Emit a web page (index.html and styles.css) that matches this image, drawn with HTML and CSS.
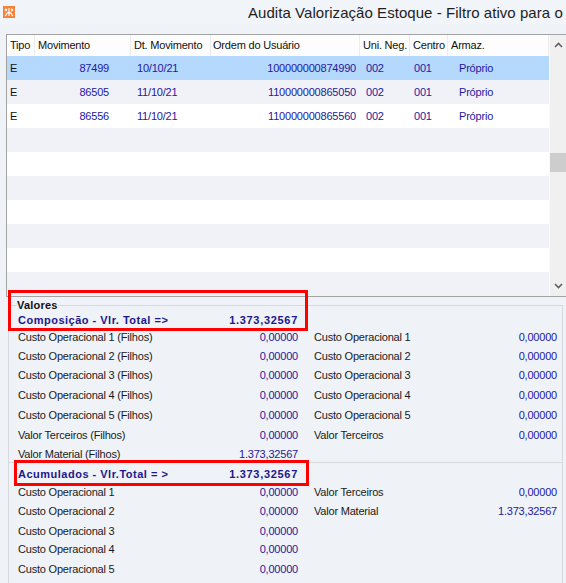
FILE: index.html
```html
<!DOCTYPE html>
<html lang="pt-BR">
<head>
    <meta charset="UTF-8">
    <title>Audita Valorização Estoque</title>
    <link rel="stylesheet" href="styles.css">
</head>
<body>
    <div class="window">
        <div class="title-bar">
            <span class="app-icon">
                <svg viewBox="0 0 12 12"><rect width="12" height="12" fill="#f5813a"/><path d="M2 3l2 2M4 3L2 5M8 3l2 2M10 3L8 5M6 2v8M3 8l3-2 3 2M2 10l2-2M10 10L8 8" stroke="#fff" stroke-width="1.1" fill="none"/></svg>
            </span>
            <span class="title">Audita Valorização Estoque - Filtro ativo para o</span>
        </div>

        <div class="grid">
            <div class="grid-body">
                <div class="grid-row grid-head">
                    <span>Tipo</span>
                    <span>Movimento</span>
                    <span>Dt. Movimento</span>
                    <span>Ordem do Usuário</span>
                    <span>Uni. Neg.</span>
                    <span>Centro</span>
                    <span>Armaz.</span>
                </div>
                <div class="grid-row selected">
                    <span class="tipo">E</span>
                    <span class="num">87499</span>
                    <span class="dt">10/10/21</span>
                    <span class="ordem">100000000874990</span>
                    <span class="uni">002</span>
                    <span class="centro">001</span>
                    <span class="armaz">Próprio</span>
                </div>
                <div class="grid-row">
                    <span class="tipo">E</span>
                    <span class="num">86505</span>
                    <span class="dt">11/10/21</span>
                    <span class="ordem">110000000865050</span>
                    <span class="uni">002</span>
                    <span class="centro">001</span>
                    <span class="armaz">Próprio</span>
                </div>
                <div class="grid-row">
                    <span class="tipo">E</span>
                    <span class="num">86556</span>
                    <span class="dt">11/10/21</span>
                    <span class="ordem">110000000865560</span>
                    <span class="uni">002</span>
                    <span class="centro">001</span>
                    <span class="armaz">Próprio</span>
                </div>
                <div class="grid-row"></div>
                <div class="grid-row"></div>
                <div class="grid-row"></div>
                <div class="grid-row"></div>
                <div class="grid-row"></div>
                <div class="grid-row"></div>
                <div class="grid-row"></div>
            </div>
            <div class="scrollbar">
                <div class="scroll-btn">
                    <svg viewBox="0 0 9 6"><polyline points="1,5 4.5,1.5 8,5" fill="none" stroke="#606060" stroke-width="1.6"/></svg>
                </div>
                <div class="scroll-track"><div class="scroll-thumb"></div></div>
                <div class="scroll-btn">
                    <svg viewBox="0 0 9 6"><polyline points="1,1 4.5,4.5 8,1" fill="none" stroke="#606060" stroke-width="1.6"/></svg>
                </div>
            </div>
        </div>

        <fieldset class="valores">
            <legend>Valores</legend>
            <div class="values composicao">
                <span class="head">Composição - Vlr. Total =&gt;</span>
                <span class="head val">1.373,32567</span>
                <span></span><span></span><span></span>

                <span>Custo Operacional 1 (Filhos)</span><span class="val">0,00000</span><span></span>
                <span>Custo Operacional 1</span><span class="val">0,00000</span>

                <span>Custo Operacional 2 (Filhos)</span><span class="val">0,00000</span><span></span>
                <span>Custo Operacional 2</span><span class="val">0,00000</span>

                <span>Custo Operacional 3 (Filhos)</span><span class="val">0,00000</span><span></span>
                <span>Custo Operacional 3</span><span class="val">0,00000</span>

                <span>Custo Operacional 4 (Filhos)</span><span class="val">0,00000</span><span></span>
                <span>Custo Operacional 4</span><span class="val">0,00000</span>

                <span>Custo Operacional 5 (Filhos)</span><span class="val">0,00000</span><span></span>
                <span>Custo Operacional 5</span><span class="val">0,00000</span>

                <span>Valor Terceiros (Filhos)</span><span class="val">0,00000</span><span></span>
                <span>Valor Terceiros</span><span class="val">0,00000</span>

                <span>Valor Material (Filhos)</span><span class="val">1.373,32567</span><span></span>
                <span></span><span></span>
            </div>
            <div class="values acumulados">
                <span class="head">Acumulados - Vlr.Total = &gt;</span>
                <span class="head val">1.373,32567</span>
                <span></span><span></span><span></span>

                <span>Custo Operacional 1</span><span class="val">0,00000</span><span></span>
                <span>Valor Terceiros</span><span class="val">0,00000</span>

                <span>Custo Operacional 2</span><span class="val">0,00000</span><span></span>
                <span>Valor Material</span><span class="val">1.373,32567</span>

                <span>Custo Operacional 3</span><span class="val">0,00000</span><span></span>
                <span></span><span></span>

                <span>Custo Operacional 4</span><span class="val">0,00000</span><span></span>
                <span></span><span></span>

                <span>Custo Operacional 5</span><span class="val">0,00000</span><span></span>
                <span></span><span></span>
            </div>
        </fieldset>

        <!-- marcações em vermelho sobre a tela -->
        <div class="mark mark-comp"></div>
        <div class="mark mark-acum"></div>
    </div>
</body>
</html>
```

FILE: styles.css
```css
html, body {
    margin: 0;
    padding: 0;
    height: 100%;
    overflow: hidden;
}
body {
    background: #eff2f7;
    font-family: "Liberation Sans", Arial, sans-serif;
    font-size: 11px;
    letter-spacing: -0.2px;
    color: #1a1a1a;
}
.window {
    position: relative;
    height: 100%;
}

/* barra de titulo */
.title-bar {
    height: 24px;
    display: flex;
    align-items: center;
    white-space: nowrap;
    overflow: hidden;
    background: #f1f4f9;
}
.app-icon {
    width: 12px;
    height: 12px;
    margin-left: 3px;
    flex: none;
    display: flex;
}
.app-icon svg {
    width: 100%;
    height: 100%;
}
.title {
    margin-left: 233px;
    font-size: 15px;
    letter-spacing: 0.05px;
    color: #1e1e1e;
    flex: none;
}

/* grade de movimentos */
.grid {
    margin: 10px 0 0 6px;
    height: 261px;
    display: flex;
    border-left: 1px solid #a3a3a3;
    border-top: 1px solid #a3a3a3;
    border-bottom: 1px solid #a3a3a3;
    background: #fff;
}
.grid-body {
    width: 542px;
    flex: none;
}
.grid-row {
    display: grid;
    grid-template-columns: 28px 96px 80px 149px 50px 38px 1fr;
    height: 24px;
    line-height: 24px;
    color: #2418a0;
    white-space: nowrap;
}
.grid-row:nth-child(odd) {
    background: #f1f2f7;
}
.grid-row.selected {
    background: #b5d8fd;
}
.grid-head {
    height: 21px;
    line-height: 20px;
    color: #111;
}
.grid-head:nth-child(odd) {
    background: #fdfdfd;
}
.grid-head span {
    padding-left: 3px;
    border-right: 1px solid #ececec;
}
.grid-head span:nth-child(4) {
    padding-left: 2px;
}
.tipo {
    padding-left: 3px;
    color: #111;
}
.num {
    text-align: right;
    padding-right: 22px;
}
.dt {
    padding-left: 6px;
}
.ordem {
    text-align: right;
    padding-right: 4px;
}
.uni {
    padding-left: 6px;
}
.centro {
    padding-left: 4px;
}
.armaz {
    padding-left: 11px;
}

/* barra de rolagem */
.scrollbar {
    width: 17px;
    flex: none;
    background: #f0f0f0;
    border-left: 1px solid #fafafa;
    display: flex;
    flex-direction: column;
}
.scroll-btn {
    height: 20px;
    display: flex;
    align-items: center;
    justify-content: center;
}
.scroll-btn svg {
    width: 9px;
    height: 6px;
}
.scroll-track {
    flex: 1;
    padding-top: 98px;
}
.scroll-thumb {
    height: 19px;
    margin: 0 1px 0 0;
    background: #cdcdcd;
}

/* quadro de valores */
.valores {
    margin: 1px 3px 0 8px;
    padding: 0 5px 40px 9px;
    border: 1px solid #d7d9de;
    min-width: 0;
}
.valores legend {
    padding: 0;
    margin-left: -1px;
    font-weight: bold;
    letter-spacing: 0.2px;
    color: #111;
    line-height: 14px;
}
.values {
    display: grid;
    grid-template-columns: 200px 80px 16px 163px 80px;
    white-space: nowrap;
}
.values span {
    display: flex;
    align-items: center;
}
.values .val {
    justify-content: flex-end;
    color: #2418a0;
}
.values .head {
    font-weight: bold;
    color: #1b188c;
    letter-spacing: 0.5px;
}
.values .head.val {
    letter-spacing: 0.7px;
    color: #1b188c;
}
.composicao {
    grid-template-rows: 16px 18px 19px 20px 20px 20px 20px 17px;
}
.acumulados {
    grid-template-rows: 18px 18px 20px 20px 16px 24px;
    margin: 0 -5px 0 -9px;
    padding: 2px 5px 0 9px;
    border-top: 1px solid #d7d9de;
}

/* marcações */
.mark {
    position: absolute;
    border: 3px solid #ff0000;
    box-sizing: border-box;
}
.mark-comp {
    left: 8px;
    top: 290px;
    width: 300px;
    height: 41px;
}
.mark-acum {
    left: 14px;
    top: 460px;
    width: 295px;
    height: 26px;
}
```
